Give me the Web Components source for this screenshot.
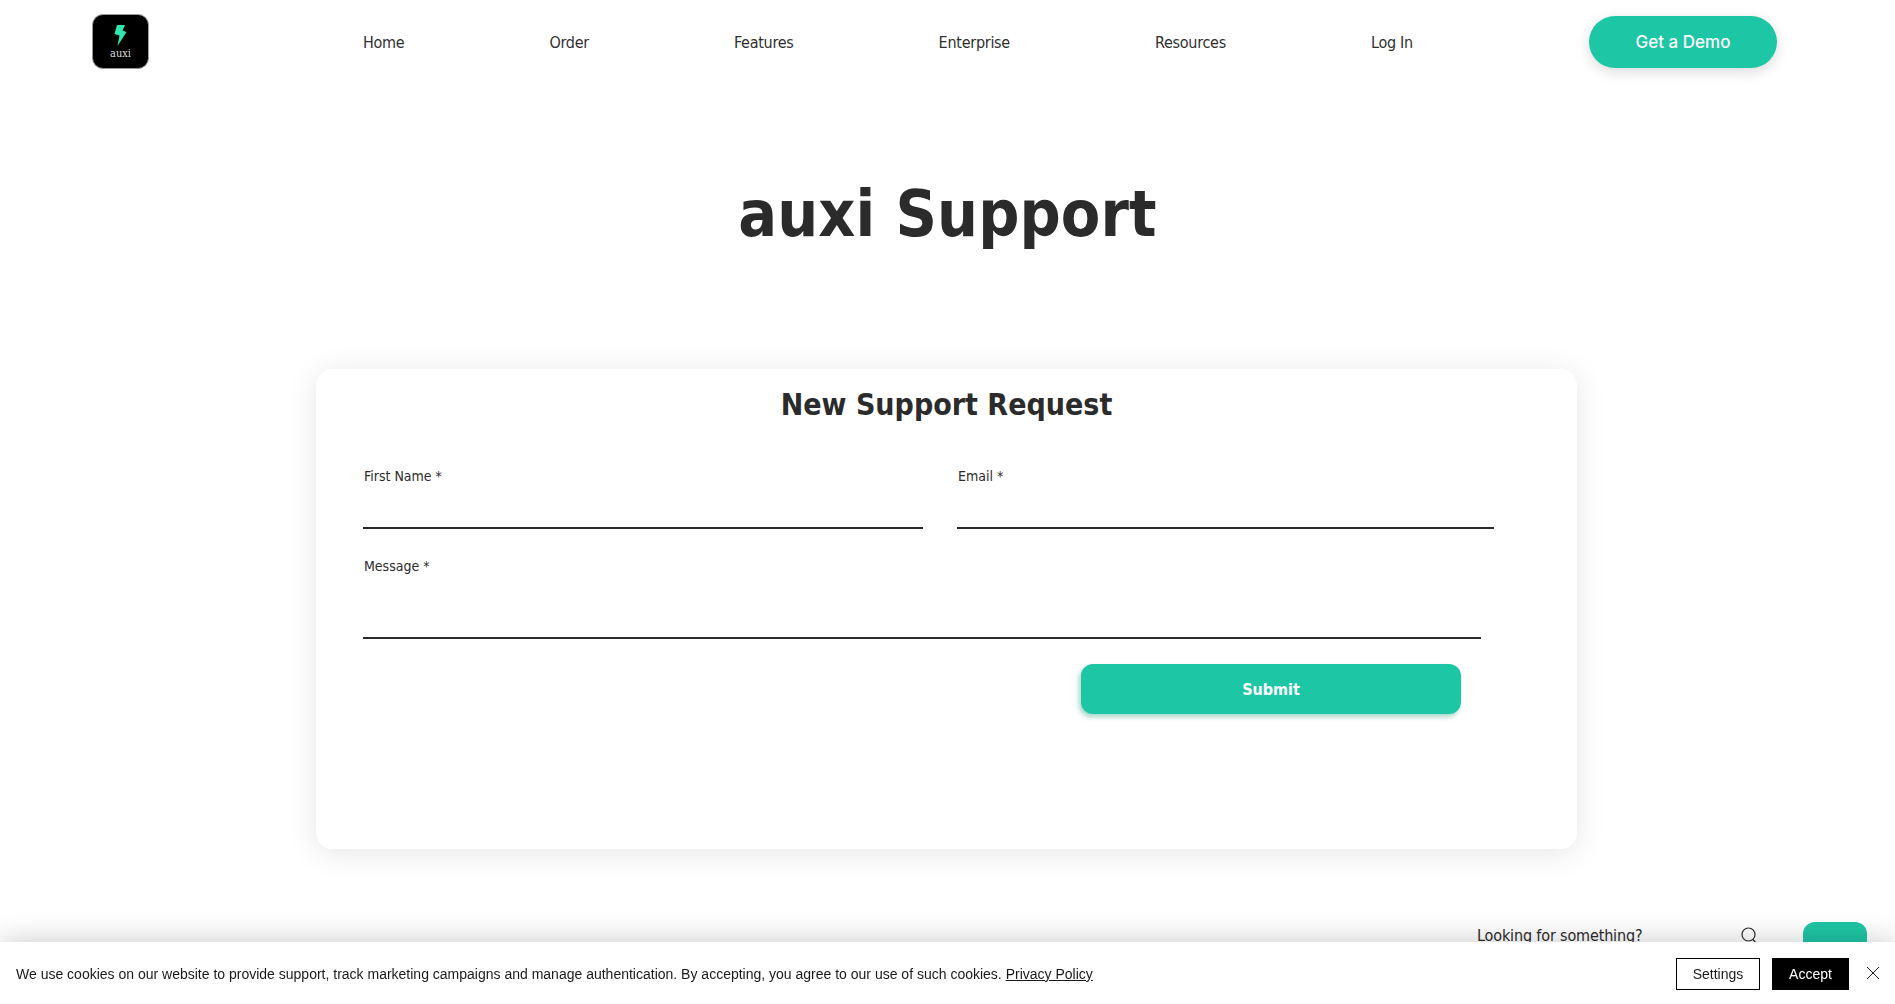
<!DOCTYPE html>
<html lang="en">
<head>
<meta charset="utf-8">
<title>auxi Support</title>
<style>
html, body { margin: 0; padding: 0; background: #fff; overflow: hidden; height: 100%; }
body { font-family: "DejaVu Sans Condensed", "DejaVu Sans", sans-serif; color: #2b2b2b; }
</style>
</head>
<body>
<site-header></site-header>
<page-title>auxi Support</page-title>
<support-card></support-card>
<search-strip></search-strip>
<cookie-bar></cookie-bar>

<script>
class SiteHeader extends HTMLElement {
    constructor() {
        super();
        this.shadowDOM = this.attachShadow({ mode: 'open' });
    }
    connectedCallback() {
        this.shadowDOM.innerHTML = `
      <style>
      :host { display: flex; align-items: center; height: 84px; padding: 0 118px 0 92px; box-sizing: border-box; }
      .logo {
          width: 57px; height: 55px; box-sizing: border-box; background: #000; border: 1px solid #999; border-radius: 11px;
          display: flex; flex-direction: column; align-items: center; justify-content: center; margin-top: -2px;
      }
      .logo svg { display: block; margin-top: 2px; }
      .logo span { color: #ddd; font: 11px/13px "DejaVu Serif Condensed", "DejaVu Serif", serif; margin-top: 1px; }
      nav { display: flex; gap: 145px; margin-left: 214px; font-size: 16px; letter-spacing: -.27px; }
      nav a { color: #2f2f2f; text-decoration: none; }
      .demo {
          margin-left: auto; width: 188px; height: 52px; border-radius: 26px; background: #1dc6a4; color: #fff;
          display: flex; align-items: center; justify-content: center;
          font: 500 17px "Inter", sans-serif; box-shadow: 0 4px 14px rgba(0,0,0,.14); text-decoration: none;
      }
      </style>
      <div class="logo">
        <svg width="13" height="21" viewBox="0 0 13 21"><path fill="#2de8ae" d="M3 0H11L8.5 5.5 12.5 7 3.5 21 5.5 10.5 .5 9Z"/></svg>
        <span>auxi</span>
      </div>
      <nav>
        <a href="#">Home</a><a href="#">Order</a><a href="#">Features</a><a href="#">Enterprise</a><a href="#">Resources</a><a href="#">Log In</a>
      </nav>
      <a class="demo" href="#">Get a Demo</a>`;
    }
}

class PageTitle extends HTMLElement {
    constructor() {
        super();
        this.attachShadow({ mode: 'open' }).innerHTML = `
      <style>
      :host { display: block; margin: 92px 0 117px; }
      h1 { margin: 0; text-align: center; font-size: 64px; line-height: 76px; font-weight: 700; color: #2b2b2b; letter-spacing: .1px; }
      </style>
      <h1><slot></slot></h1>`;
    }
}

class FormField extends HTMLElement {
    constructor() {
        super();
        this.shadowDOM = this.attachShadow({ mode: 'open' });
    }
    connectedCallback() {
        const tall = this.hasAttribute('tall');
        this.shadowDOM.innerHTML = `
      <style>
      :host { display: block; }
      label { display: block; font-size: 14px; line-height: 18px; padding-left: 1px; color: #2b2b2b; }
      .input { display: block; width: 100%; height: ${tall ? 64 : 44}px; box-sizing: border-box; border: 0; border-bottom: 2px solid #2b2b2b; padding: 0; outline: 0; resize: none; background: none; }
      </style>
      <label>${this.getAttribute('label')} *</label>
      ${tall ? '<textarea class="input"></textarea>' : '<input class="input">'}`;
    }
}

class SupportCard extends HTMLElement {
    constructor() {
        super();
        this.attachShadow({ mode: 'open' }).innerHTML = `
      <style>
      :host {
          display: block; box-sizing: border-box; width: 1261px; height: 480px; margin-left: 316px;
          background: #fff; border-radius: 16px; box-shadow: 0 4px 30px rgba(0,0,0,.1); padding: 16px 0 0 47px;
      }
      h2 { margin: 0 0 42px -47px; text-align: center; font-size: 30px; line-height: 40px; font-weight: 700; color: #2b2b2b; }
      .row { display: grid; grid-template-columns: 560px 537px; column-gap: 34px; }
      form-field.msg { width: 1118px; margin-top: 28px; }
      button {
          display: block; width: 380px; height: 50px; margin: 25px 0 0 718px; border: 0; border-radius: 12px;
          background: #1dc6a4; color: #fff; font: 700 16px "DejaVu Sans Condensed", "DejaVu Sans", sans-serif;
          box-shadow: -2px 3px 5px rgba(29,150,120,.4);
      }
      </style>
      <h2>New Support Request</h2>
      <div class="row">
        <form-field label="First Name"></form-field>
        <form-field label="Email"></form-field>
      </div>
      <form-field class="msg" label="Message" tall></form-field>
      <button type="button">Submit</button>`;
    }
}

class SearchStrip extends HTMLElement {
    constructor() {
        super();
        this.attachShadow({ mode: 'open' }).innerHTML = `
      <style>
      :host { display: flex; align-items: flex-start; height: 60px; margin-top: 73px; padding-left: 1477px; box-sizing: border-box; }
      span { font-size: 16px; line-height: 26px; margin-top: 1px; letter-spacing: -.15px; color: #2b2b2b; width: 264px; }
      svg { display: block; margin-top: 5px; }
      .go { width: 64px; height: 60px; border-radius: 12px; background: #1dc6a4; margin-left: 46px; }
      </style>
      <span>Looking for something?</span>
      <svg width="16" height="18" viewBox="0 0 16 18" fill="none" stroke="#2b2b2b" stroke-width="1.2"><circle cx="7.5" cy="7.5" r="6.5"/><path d="M12 12.5l3 3.5"/></svg>
      <div class="go"></div>`;
    }
}

class CookieBar extends HTMLElement {
    constructor() {
        super();
        this.attachShadow({ mode: 'open' }).innerHTML = `
      <style>
      :host {
          position: fixed; left: 0; right: 0; bottom: 0; height: 62px; box-sizing: border-box; background: #fff;
          display: flex; align-items: center; padding: 2px 16px 0; box-shadow: 0 0 30px rgba(0,0,0,.22);
          font: 14px "Liberation Sans", Arial, sans-serif; color: #1a1a1a;
      }
      p { margin: 0; flex: 1; }
      a { color: inherit; }
      button { height: 32px; box-sizing: border-box; font: inherit; border: 1px solid #000; border-radius: 0; padding: 0; }
      .settings { width: 84px; background: #fff; color: #1a1a1a; }
      .accept { width: 77px; margin-left: 12px; background: #000; color: #fff; }
      svg { display: block; margin: -2px 0 0 18px; }
      </style>
      <p>We use cookies on our website to provide support, track marketing campaigns and manage authentication. By accepting, you agree to our use of such cookies. <a href="#">Privacy Policy</a></p>
      <button class="settings">Settings</button>
      <button class="accept">Accept</button>
      <svg width="12" height="12" viewBox="0 0 12 12" stroke="#1a1a1a" stroke-width="1"><path d="M0 0L12 12M12 0L0 12"/></svg>`;
    }
}

customElements.define('site-header', SiteHeader);
customElements.define('page-title', PageTitle);
customElements.define('form-field', FormField);
customElements.define('support-card', SupportCard);
customElements.define('search-strip', SearchStrip);
customElements.define('cookie-bar', CookieBar);
</script>
</body>
</html>
